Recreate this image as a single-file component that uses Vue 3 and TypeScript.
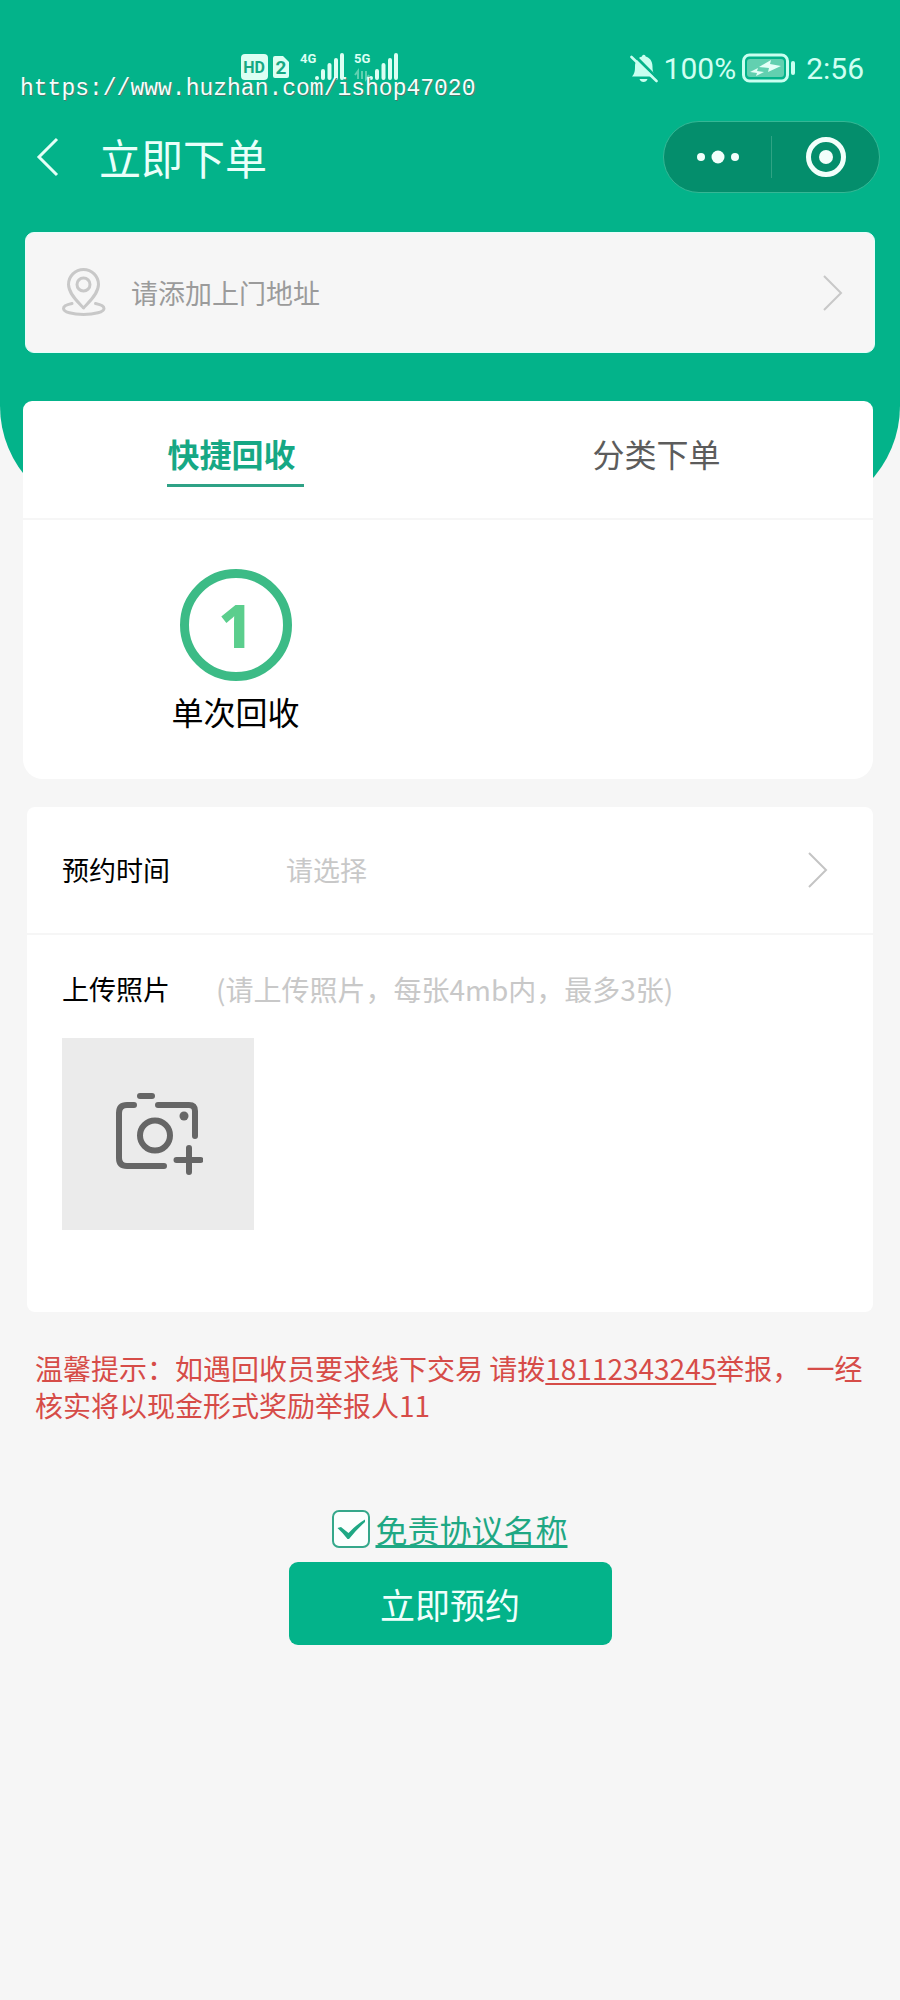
<script setup lang="ts">
import { ref } from 'vue'

interface Tab {
  id: string
  label: string
}

const tabs: Tab[] = [
  { id: 'quick', label: '快捷回收' },
  { id: 'category', label: '分类下单' },
]

const activeTab = ref<string>('quick')
const agreed = ref<boolean>(true)
const phone = '18112343245'
</script>

<template>
  <div class="page">
    <header class="top">
      <div class="status">
        <div class="status-left">
          <svg class="sim" viewBox="0 0 158 32" aria-hidden="true">
            <rect x="1" y="4" width="27" height="26" rx="4" fill="#dcfff3" />
            <text x="14" y="23" class="hd" text-anchor="middle">HD</text>
            <path d="M35 6h8l6 6v14q0 2-2 2H35q-2 0-2-2V8q0-2 2-2z" fill="#dcfff3" />
            <text x="41" y="24" class="num" text-anchor="middle">2</text>
            <text x="60" y="13" class="net">4G</text>
            <g stroke="#dcfff3" stroke-width="4" stroke-linecap="round">
              <path d="M77 28v0M83 28V21M89.500 28V15M96 28V10M102 28V5" />
              <path d="M131 28v0M137 28V21M143.500 28V15M150 28V10M156 28V5" />
            </g>
            <text x="114" y="13" class="net">5G</text>
            <path d="M118 29v-8l-3 4M122 21v8M126 21v8l3-4" fill="none" stroke="#5fd0b0" stroke-width="2" />
          </svg>
        </div>
        <div class="status-right">
          <svg class="bell" viewBox="0 0 28 32" aria-hidden="true">
            <path
              d="M2 24.500c2.500-3 3-5 3-10C5 9 8 5.500 12 4.500V4q1.800-2.500 3.600 0v.5c4 1 6.900 4.500 6.900 10 0 5 .8 7 3.500 10z"
              fill="#c9fff0"
            />
            <path d="M9.500 27h8q-1 3-4 3t-4-3z" fill="#c9fff0" />
            <path d="M3 2l26 26" stroke="#03b38a" stroke-width="3" />
            <path d="M1.500 5l25 24" stroke="#c9fff0" stroke-width="2.600" stroke-linecap="round" />
          </svg>
          <span>100%</span>
          <svg class="battery" viewBox="0 0 54 30" aria-hidden="true">
            <rect x="1.500" y="2" width="44" height="26" rx="6" fill="none" stroke="#c9fff0" stroke-width="3" />
            <rect x="5" y="6" width="37" height="18" rx="3" fill="#62d0b0" />
            <path d="M17 14l12-7-1 4 11 2-13 6 1-4z" fill="#e4fff7" />
            <path d="M8 19l8-4-1 3 7 1-8 4 1-3z" fill="#e4fff7" />
            <rect x="49" y="8" width="4" height="14" rx="2" fill="#c9fff0" />
          </svg>
          <span class="clock">2:56</span>
        </div>
        <span class="watermark">https://www.huzhan.com/ishop47020</span>
      </div>

      <nav class="nav">
        <button type="button" class="back" aria-label="返回">
          <svg viewBox="0 0 24 40" aria-hidden="true">
            <path d="M21 2L3 20l18 18" fill="none" stroke="#e4fff7" stroke-width="3" />
          </svg>
        </button>
        <h1 class="title">立即下单</h1>
        <div class="capsule">
          <button type="button" aria-label="更多">
            <svg class="dots" viewBox="0 0 44 14" aria-hidden="true">
              <g fill="#f2fffb">
                <circle cx="5" cy="7" r="4" />
                <circle cx="22" cy="7" r="6.500" />
                <circle cx="39" cy="7" r="4" />
              </g>
            </svg>
          </button>
          <span class="divider"></span>
          <button type="button" aria-label="关闭">
            <svg class="target" viewBox="0 0 40 40" aria-hidden="true">
              <circle cx="20" cy="20" r="17.500" fill="none" stroke="#f2fffb" stroke-width="5" />
              <circle cx="20" cy="20" r="7" fill="#f2fffb" />
            </svg>
          </button>
        </div>
      </nav>

      <button type="button" class="address">
        <svg class="pin" viewBox="0 0 44 50" aria-hidden="true">
          <g fill="none" stroke="#c8c8c8" stroke-width="3" stroke-linejoin="round" stroke-linecap="round">
            <path d="M21.500 40C17 35 6.500 26 6.500 16.500a15 15 0 0 1 30 0C36.500 26 26 35 21.500 40z" />
            <circle cx="21.500" cy="16.500" r="6.500" />
            <path d="M10 35.500C5 36.500 1.500 38 1.500 40.500c0 3.500 9 6 20 6s20.500-2.500 20.500-6c0-2.500-3.500-4-8.500-5" />
          </g>
        </svg>
        <span>请添加上门地址</span>
        <svg class="chevron" viewBox="0 0 20 36" aria-hidden="true">
          <path d="M1 1l17 17L1 35" fill="none" stroke="#c8c8c8" stroke-width="2" />
        </svg>
      </button>
    </header>

    <main class="content">
      <section class="card order">
        <div class="tabs" role="tablist">
          <button
            v-for="tab in tabs"
            :key="tab.id"
            type="button"
            role="tab"
            class="tab"
            :class="{ active: tab.id === activeTab }"
            :aria-selected="tab.id === activeTab"
            @click="activeTab = tab.id"
          >
            <span>{{ tab.label }}</span>
          </button>
        </div>
        <div class="options">
          <button type="button" class="option">
            <span class="ring">1</span>
            <span>单次回收</span>
          </button>
        </div>
      </section>

      <section class="card form">
        <div class="row">
          <span id="time-label" class="label">预约时间</span>
          <button type="button" class="picker" aria-labelledby="time-label">
            <span>请选择</span>
            <svg class="chevron" viewBox="0 0 20 36" aria-hidden="true">
              <path d="M1 1l17 17L1 35" fill="none" stroke="#c4c4c4" stroke-width="2" />
            </svg>
          </button>
        </div>
        <div class="upload">
          <div class="upload-head">
            <span id="photo-label" class="label">上传照片</span>
            <span class="hint">(请上传照片，每张4mb内，最多3张)</span>
          </div>
          <button type="button" class="photo" aria-labelledby="photo-label">
            <svg viewBox="0 0 90 84" aria-hidden="true">
              <g fill="none" stroke="#666" stroke-width="6" stroke-linecap="round">
                <path d="M27 4h12" />
                <path d="M21 13h-7q-8 0-8 8v45q0 8 8 8h37" />
                <path d="M45 13h31q6 0 6 6v25" />
                <circle cx="42" cy="43.500" r="15" />
                <path d="M76 56v24M63.500 68h24" />
              </g>
              <circle cx="71" cy="24" r="4.500" fill="#666" />
            </svg>
          </button>
        </div>
      </section>

      <p class="notice">
        温馨提示：如遇回收员要求线下交易 请拨<a :href="`tel:${phone}`">{{ phone }}</a>举报， 一经核实将以现金形式奖励举报人11
      </p>

      <div class="submit">
        <div class="agree">
          <span class="check">
            <input id="agree" v-model="agreed" type="checkbox" aria-label="免责协议名称" />
            <svg v-if="agreed" viewBox="0 0 38 38" aria-hidden="true">
              <path d="M5.500 18l3.500-1 7.500 6Q25 14 33 9.500V12Q25 19 17 29h-1.500Q11 23 5.500 18z" fill="#1fa884" />
            </svg>
          </span>
          <a href="#agreement">免责协议名称</a>
        </div>
        <button type="button" class="primary">立即预约</button>
      </div>
    </main>
  </div>
</template>

<style>
body {
  margin: 0;
  background: #f6f6f6;
}
</style>

<style scoped>
.page {
  min-height: 100vh;
  background: #f6f6f6;
  color: #000;
  font-family: "Noto Sans CJK SC", "Noto Sans", sans-serif;
  font-size: 27px;
  line-height: 36px;
}

button {
  margin: 0;
  padding: 0;
  border: 0;
  background: none;
  color: inherit;
  font: inherit;
  cursor: pointer;
}

svg {
  display: block;
  flex: none;
}

.top {
  padding-bottom: 163px;
  border-radius: 0 0 110px 110px;
  background: #03b38a;
}

.status {
  position: relative;
  display: flex;
  justify-content: space-between;
  padding: 50px 36px 36px 240px;
  color: #d0fff2;
  font-family: Roboto, sans-serif;
  font-size: 30px;
  line-height: 32px;
}

.sim {
  width: 158px;
  height: 32px;
}

.sim text {
  font-family: "Liberation Sans Narrow", Roboto, sans-serif;
  font-weight: 700;
}

.hd {
  fill: #16a883;
  font-size: 16px;
}

.num {
  fill: #16a883;
  font-size: 19px;
}

.net {
  fill: #dcfff3;
  font-size: 13px;
}

.status-right {
  display: flex;
  align-items: center;
}

.bell {
  width: 28px;
  height: 32px;
  margin-right: 6px;
}

.battery {
  width: 54px;
  height: 30px;
  margin: 0 10px 0 6px;
}

.status-right span {
  padding-top: 3px;
}

.watermark {
  position: absolute;
  top: 73px;
  left: 20px;
  color: #f4fffc;
  font-family: "Liberation Mono", monospace;
  font-size: 23px;
  text-shadow: 1px 1px 0 #4c7a6c;
}

.nav {
  display: flex;
  align-items: center;
  padding: 0 20px 0 34px;
}

.back {
  padding: 0 2px;
}

.back svg {
  width: 24px;
  height: 40px;
}

.title {
  flex: 1;
  margin: 0 0 0 37px;
  color: #e9fffa;
  font-size: 42px;
  font-weight: 400;
  line-height: 60px;
}

.capsule {
  display: flex;
  align-items: center;
  box-sizing: border-box;
  width: 217px;
  height: 72px;
  border: 1px solid #35b795;
  border-radius: 36px;
  background: #048e6c;
}

.capsule button {
  display: flex;
  flex: 1;
  align-items: center;
  justify-content: center;
}

.divider {
  width: 1px;
  height: 42px;
  background: #2fa384;
}

.dots {
  width: 44px;
  height: 14px;
}

.target {
  width: 40px;
  height: 40px;
}

.address {
  display: flex;
  align-items: center;
  box-sizing: border-box;
  width: calc(100% - 50px);
  min-height: 121px;
  margin: 39px 25px 0;
  padding: 0 31px 0 36px;
  border: 1px solid #e6fffb;
  border-radius: 9px;
  background: #f6f6f6;
  color: #9b9b9b;
  text-align: left;
}

.address span {
  flex: 1;
  margin-left: 25px;
}

.pin {
  width: 44px;
  height: 50px;
}

.chevron {
  width: 20px;
  height: 36px;
}

.content {
  margin-top: -115px;
  padding: 0 27px 48px;
}

.card {
  background: #fff;
}

.order {
  margin: 0 0 28px -4px;
  border-radius: 9px 9px 20px 20px;
  font-size: 32px;
  line-height: 44px;
}

.tabs {
  display: flex;
  padding: 30px 0 31px;
  border-bottom: 2px solid #f6f6f6;
}

.tab {
  flex: 1;
  color: #5c5c5c;
}

.tab span {
  display: inline-block;
  padding: 0 8px 9px 0;
  border-bottom: 3px solid transparent;
}

.tab.active {
  color: #16a884;
  font-weight: 700;
}

.tab.active span {
  border-color: #2fa286;
}

.options {
  display: grid;
  grid-template-columns: 1fr 1fr;
  padding: 49px 0 46px;
}

.option {
  display: flex;
  flex-direction: column;
  align-items: center;
  gap: 8px;
}

.ring {
  display: flex;
  align-items: center;
  justify-content: center;
  box-sizing: border-box;
  width: 112px;
  height: 112px;
  border: 9px solid #3cbb86;
  border-radius: 50%;
  color: #5bce8d;
  font-family: "Noto Sans", sans-serif;
  font-size: 60px;
  font-weight: 800;
}

.form {
  border-radius: 8px;
}

.row {
  display: flex;
  align-items: center;
  min-height: 126px;
  padding: 0 45px 0 35px;
  border-bottom: 2px solid #f6f6f6;
}

.label {
  flex: none;
  width: 154px;
}

.picker {
  display: flex;
  flex: 1;
  align-items: center;
  justify-content: space-between;
  margin-left: 70px;
  color: #c8c8c8;
}

.upload {
  padding: 36px 35px 82px;
}

.upload-head {
  display: flex;
}

.hint {
  color: #c8c8c8;
  font-size: 28px;
}

.photo {
  display: flex;
  align-items: center;
  justify-content: center;
  width: 192px;
  height: 192px;
  margin-top: 31px;
  background: #ebebeb;
}

.photo svg {
  width: 90px;
  height: 84px;
}

.notice {
  margin: 38px 0 0 8px;
  color: #d64c48;
  font-size: 28px;
  line-height: 37px;
}

.notice a {
  color: inherit;
  text-decoration-thickness: 2px;
  text-underline-offset: 3px;
}

.submit {
  display: flex;
  flex-direction: column;
  align-items: center;
  gap: 14px;
  margin-top: 86px;
}

.agree {
  display: flex;
  align-items: center;
  gap: 5px;
  font-size: 32px;
  line-height: 38px;
}

.agree a {
  color: #1fa884;
  text-decoration-thickness: 3px;
  text-underline-offset: 2px;
}

.check {
  display: grid;
}

.check input,
.check svg {
  grid-area: 1 / 1;
  box-sizing: border-box;
  width: 38px;
  height: 38px;
  margin: 0;
}

.check input {
  appearance: none;
  border: 2px solid #35a88b;
  border-radius: 7px;
  background: #fbfffe;
}

.check svg {
  pointer-events: none;
}

.primary {
  width: 323px;
  height: 83px;
  border-radius: 9px;
  background: #03b38a;
  color: #f0fffb;
  font-size: 35px;
}
</style>
